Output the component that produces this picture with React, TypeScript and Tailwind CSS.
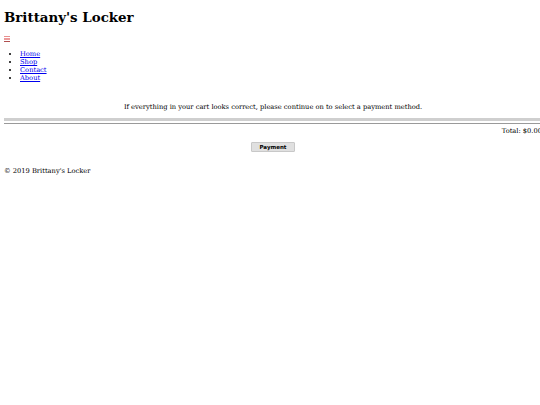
export default function App() {
  return (
    <div className="w-[540px] h-[405px] overflow-hidden bg-white">
      <div className="w-[542px] pl-[4px] text-[6.7px] leading-[8px] text-black" style={{ fontFamily: '"DejaVu Serif", serif' }}>
        <h1 className="text-[13.4px] font-bold leading-[16px] pt-[9px] mb-[11px]">Brittany's Locker</h1>
        <div className="h-[6px] w-[6px] mb-[8px] flex flex-col justify-between">
          <div className="h-[1px] bg-[#e89090]" />
          <div className="h-[2px] bg-[#ec9a9a]" />
          <div className="h-[1px] bg-[#b05050]" />
        </div>
        <ul className="list-disc pl-[16px] text-[6.7px] leading-[8px]">
          <li><a className="text-[#0000ee] underline">Home</a></li>
          <li><a className="text-[#0000ee] underline">Shop</a></li>
          <li><a className="text-[#0000ee] underline">Contact</a></li>
          <li><a className="text-[#0000ee] underline">About</a></li>
        </ul>
        <p className="text-center mt-[21px] leading-[9px]">If everything in your cart looks correct, please continue on to select a payment method.</p>
        <div className="mt-[6px] h-[3px] bg-[#cfcfcf]" />
        <div className="mt-[2px] h-[1px] bg-[#9a9a9a]" />
        <div className="text-right mt-[3px] leading-[9px]">Total: $0.00</div>
        <div className="flex justify-center mt-[6px]">
          <button className="w-[44px] h-[10px] bg-[#e0e0e0] border border-[#c8c8c8] rounded-[1px] text-[5.5px] font-bold leading-[8px]" style={{ fontFamily: '"DejaVu Sans", sans-serif' }}>Payment</button>
        </div>
        <div className="mt-[15px] leading-[9px]">© 2019 Brittany's Locker</div>
      </div>
    </div>
  );
}
